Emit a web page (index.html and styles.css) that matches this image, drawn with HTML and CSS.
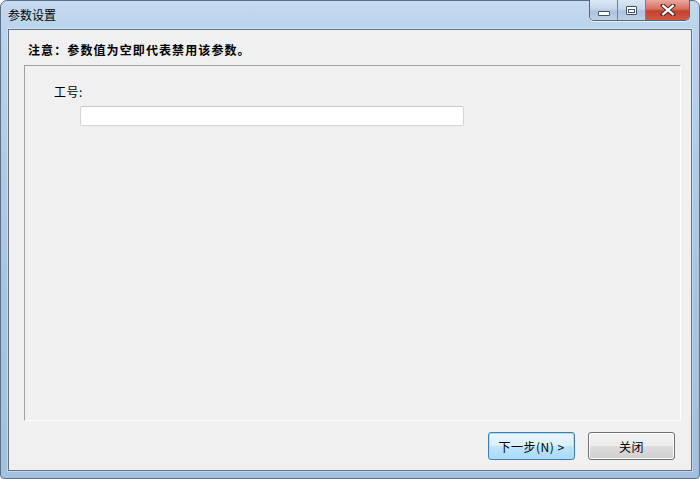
FILE: index.html
```html
<!DOCTYPE html>
<html>
<head>
<meta charset="utf-8">
<link rel="stylesheet" href="styles.css">
</head>
<body>
<div class="window">
  <div class="titlebar">
    <span class="title">参数设置</span>
    <div class="caption">
      <div class="cbtn cmin"><span class="min-glyph"></span></div>
      <div class="cbtn cmax"><span class="max-glyph"></span></div>
      <div class="cbtn cclose">
        <svg width="16" height="12" viewBox="0 0 16 12">
          <path d="M3 1.5 L13 10.5 M13 1.5 L3 10.5" stroke="#4b2a28" stroke-width="4.2" stroke-linecap="square"/>
          <path d="M3.2 1.8 L12.8 10.2 M12.8 1.8 L3.2 10.2" stroke="#ffffff" stroke-width="2.2" stroke-linecap="square"/>
        </svg>
      </div>
    </div>
  </div>
  <div class="client">
    <div class="notice">注意：参数值为空即代表禁用该参数。</div>
    <div class="group">
      <div class="field-label">工号:</div>
      <input class="field-input" type="text">
    </div>
    <div class="footer">
      <button class="btn btn-default">下一步(N) &gt;</button>
      <button class="btn">关闭</button>
    </div>
  </div>
</div>
</body>
</html>
```

FILE: styles.css
```css
html, body {
  margin: 0;
  padding: 0;
  width: 700px;
  height: 479px;
  overflow: hidden;
  background: #ffffff;
}

.window {
  box-sizing: border-box;
  width: 700px;
  height: 479px;
  display: flex;
  flex-direction: column;
  padding: 0 7px 7px 7px;
  border: 1px solid #5b6f87;
  border-radius: 7px 7px 4px 4px;
  background: linear-gradient(180deg, #c6daf0 0px, #bad2ec 30px, #a9c4e2 60%, #a5c0df 100%);
  font-family: "Noto Sans CJK SC", "Liberation Sans", sans-serif;
  font-size: 12px;
  color: #000;
}

.titlebar {
  height: 28px;
  flex: none;
  display: flex;
  align-items: flex-start;
  justify-content: space-between;
}

.title {
  margin-top: 5px;
  font-size: 12px;
  line-height: 18px;
  color: #000;
}

.caption {
  display: flex;
  margin-top: -1px;
  margin-right: 2px;
  height: 20px;
  border: 1px solid #536880;
  border-top: none;
  border-radius: 0 0 5px 5px;
  overflow: hidden;
  box-shadow: 0 1px 0 rgba(255,255,255,0.6);
}

.cbtn {
  height: 20px;
  display: flex;
  align-items: center;
  justify-content: center;
}

.cmin,
.cmax {
  width: 27px;
  border-right: 1px solid #6e8299;
  background: linear-gradient(180deg, #dbe7f4 0%, #c6d7ea 45%, #aec3dc 55%, #bdd1e6 100%);
}

.cclose {
  width: 43px;
  background: linear-gradient(180deg, #e8a89c 0%, #d8705f 45%, #c3412e 55%, #d25a43 100%);
}

.min-glyph {
  display: block;
  width: 10px;
  height: 3px;
  margin-top: 6px;
  background: #ffffff;
  border: 1px solid #3d4f66;
  border-radius: 1px;
}

.max-glyph {
  display: block;
  box-sizing: border-box;
  width: 11px;
  height: 9px;
  border: 1px solid #3d4f66;
  border-radius: 1px;
  background: #ffffff;
  position: relative;
}

.max-glyph::after {
  content: "";
  position: absolute;
  left: 1px;
  top: 2px;
  width: 5px;
  height: 2px;
  border: 1px solid #3d4f66;
}

.client {
  flex: 1;
  display: flex;
  flex-direction: column;
  background: #f0f0f0;
  border: 1px solid #5f7389;
  box-shadow: 0 0 0 1px rgba(255,255,255,0.35);
}

.notice {
  padding: 13px 0 0 19px;
  height: 22px;
  line-height: 14px;
  font-weight: bold;
  font-size: 12px;
  letter-spacing: 1.1px;
}

.group {
  box-sizing: border-box;
  margin: 0 10px 0 15px;
  height: 356px;
  border-top: 1px solid #a0a0a0;
  border-left: 1px solid #a0a0a0;
  border-right: 1px solid #ffffff;
  border-bottom: 1px solid #ffffff;
  padding: 19px 0 0 29px;
  display: flex;
  flex-direction: column;
  align-items: flex-start;
}

.field-label {
  font-size: 12px;
  line-height: 14px;
  height: 14px;
  letter-spacing: 0.5px;
}

.field-input {
  box-sizing: border-box;
  margin: 7px 0 0 26px;
  width: 384px;
  height: 20px;
  border: 1px solid #d5d5d5;
  border-top-color: #c5c5c5;
  border-radius: 2px;
  background: #ffffff;
  outline: none;
  padding: 0 3px;
}

.footer {
  display: flex;
  justify-content: flex-end;
  gap: 13px;
  padding: 11px 16px 0 0;
}

.btn {
  box-sizing: border-box;
  width: 87px;
  height: 28px;
  border: 1px solid #707070;
  border-radius: 3px;
  background: linear-gradient(180deg, #f2f2f2 0%, #ebebeb 50%, #dddddd 51%, #cfcfcf 100%);
  box-shadow: inset 0 0 0 1px #fcfcfc;
  font-family: "Noto Sans CJK SC", "Liberation Sans", sans-serif;
  font-size: 12px;
  color: #000;
  padding: 0;
  letter-spacing: 0.5px;
}

.btn-default {
  border-color: #3c7fb1;
  background: linear-gradient(180deg, #eaf6fd 0%, #d9f0fc 50%, #bee6fd 51%, #a7d9f5 100%);
  box-shadow: inset 0 0 0 1px #b0dcf5;
}
```
